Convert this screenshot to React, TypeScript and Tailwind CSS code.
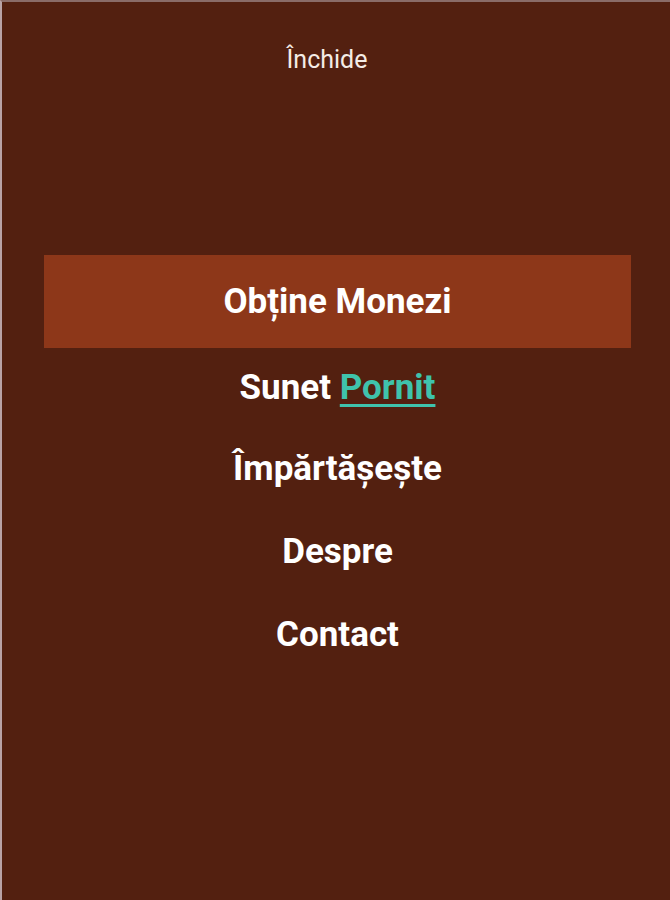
const items = ["Împărtășește", "Despre", "Contact"];

const App = () => {
  return (
    <div
      className="h-[900px] w-[670px] bg-[#532010] border-l-2 border-t-2 border-l-[#b9a3a6] border-t-[#8a6c68] flex flex-col items-center"
      style={{ fontFamily: "Roboto, 'Noto Sans', sans-serif" }}
    >
      <button className="mt-[42px] mr-[18px] h-[32px] text-[25px] leading-[32px] text-[#f4ece6]">
        Închide
      </button>
      <div className="mt-[179px] w-full flex flex-col items-center">
        <div className="ml-[42px] mr-[39px] self-stretch h-[93px] bg-[#8d3719] flex items-center justify-center pt-[2px]">
          <span className="text-[35px] font-bold text-white">Obține Monezi</span>
        </div>
        <div className="ml-[3px] h-[80px] flex items-center text-[35px] font-bold text-white">
          Sunet&nbsp;
          <span className="text-[#3fc3ac] underline decoration-[3px] underline-offset-[5px]">Pornit</span>
        </div>
        {items.map((label) => (
          <div key={label} className="ml-[3px] h-[83px] flex items-center text-[35px] font-bold text-white">
            {label}
          </div>
        ))}
      </div>
    </div>
  );
};

export default App;
